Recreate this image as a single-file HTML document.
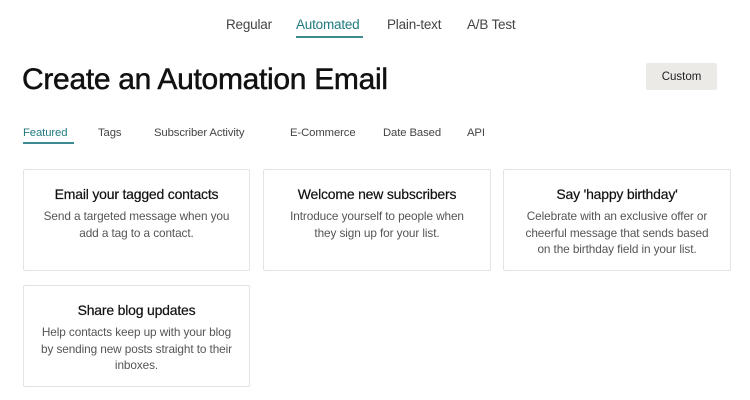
<!DOCTYPE html>
<html><head><meta charset="utf-8"><style>
*{margin:0;padding:0;box-sizing:border-box}
body{width:750px;height:400px;background:#fff;font-family:"Liberation Sans",sans-serif;position:relative;overflow:hidden;color:#222}
.t{position:absolute;white-space:nowrap}
.top{font-size:13.5px;color:#444;top:17px;letter-spacing:-0.2px}
.sub{font-size:11.3px;color:#444;top:127px;letter-spacing:-0.1px}
.card{position:absolute;border:1px solid #e3e3e3;border-radius:2px;background:#fff;text-align:center}
.card h3{font-size:14px;font-weight:normal;color:#111;margin-top:16px;letter-spacing:-0.2px;-webkit-text-stroke:0.2px #111}
.card p{font-size:11.8px;color:#555;line-height:16.5px;margin-top:6px;letter-spacing:-0.1px}
</style></head><body>
<div class="t top" style="left:226px">Regular</div>
<div class="t top" style="left:296px;color:#207a80">Automated</div>
<div style="position:absolute;left:296px;top:36px;width:67px;height:2px;background:#3d8a90"></div>
<div class="t top" style="left:387px">Plain-text</div>
<div class="t top" style="left:467px">A/B Test</div>
<div class="t" style="left:22px;top:63px;font-size:30px;color:#111;letter-spacing:-0.3px;-webkit-text-stroke:0.5px #111">Create an Automation Email</div>
<div style="position:absolute;left:646px;top:63px;width:71px;height:27px;background:#ebeae6;border-radius:2px;font-size:11.5px;color:#222;text-align:center;line-height:28px">Custom</div>
<div class="t sub" style="left:23px;color:#207a80">Featured</div>
<div style="position:absolute;left:23px;top:142px;width:51px;height:2px;background:#3d8a90"></div>
<div class="t sub" style="left:98px">Tags</div>
<div class="t sub" style="left:154px">Subscriber Activity</div>
<div class="t sub" style="left:290px">E-Commerce</div>
<div class="t sub" style="left:383px">Date Based</div>
<div class="t sub" style="left:467px">API</div>
<div class="card" style="left:23px;top:169px;width:227px;height:102px"><h3>Email your tagged contacts</h3><p>Send a targeted message when you<br>add a tag to a contact.</p></div>
<div class="card" style="left:263px;top:169px;width:228px;height:102px"><h3>Welcome new subscribers</h3><p>Introduce yourself to people when<br>they sign up for your list.</p></div>
<div class="card" style="left:503px;top:169px;width:228px;height:102px"><h3>Say 'happy birthday'</h3><p>Celebrate with an exclusive offer or<br>cheerful message that sends based<br>on the birthday field in your list.</p></div>
<div class="card" style="left:23px;top:285px;width:227px;height:102px"><h3>Share blog updates</h3><p>Help contacts keep up with your blog<br>by sending new posts straight to their<br>inboxes.</p></div>
</body></html>
